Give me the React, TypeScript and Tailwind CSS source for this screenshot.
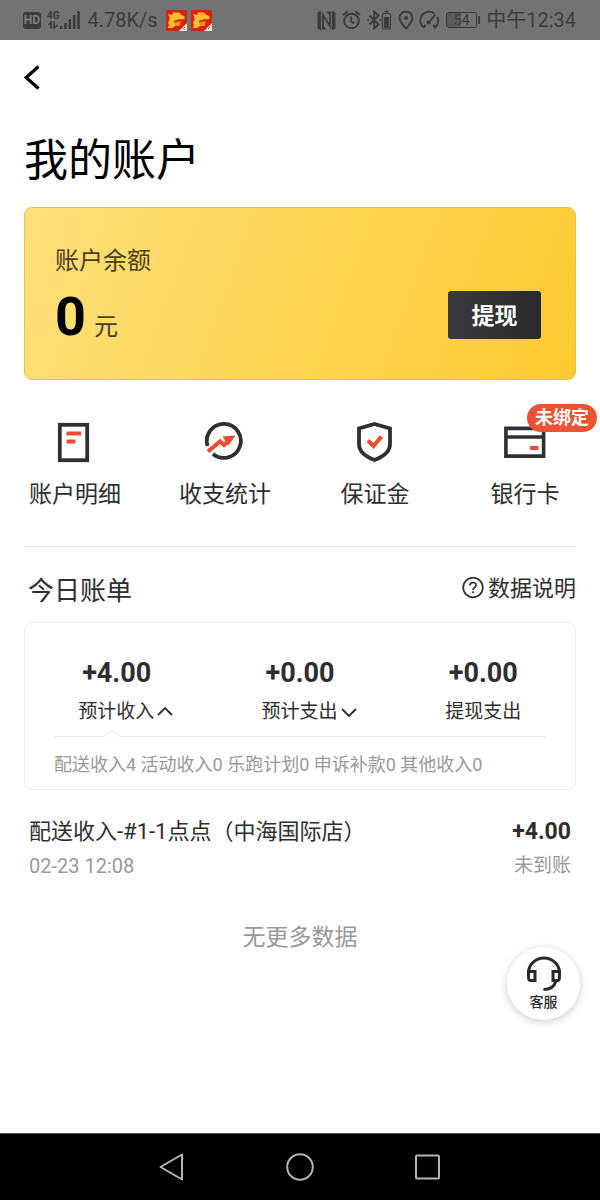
import type { ReactNode } from 'react';

const stats = [
    { amount: '+4.00', label: '预计收入', arrow: 'up' },
    { amount: '+0.00', label: '预计支出', arrow: 'down' },
    { amount: '+0.00', label: '提现支出', arrow: '' },
];

function StatusBar() {
    return (
        <div className="flex h-10 items-center justify-between bg-[#737373] pr-6 pl-[23px] text-xl leading-6 text-[#3c3c3c]">
            <div className="flex items-center">
                <span className="flex h-[17px] w-[18px] items-center justify-center rounded-[3px] bg-[#3c3c3c] text-[12px] leading-4 font-bold text-[#808080]">HD</span>
                <div className="ml-[6px] flex items-end">
                    <div className="flex flex-col items-center">
                        <span className="text-[10px] leading-[10px] font-bold">4G</span>
                        <svg width="10" height="8" viewBox="0 0 10 8" fill="none" stroke="currentColor" strokeWidth="1.6">
                            <path d="M0.5 4L3 1V7.5M6 0.5V7L9.5 4" />
                        </svg>
                    </div>
                    <svg width="20" height="18" viewBox="0 0 20 18" fill="currentColor">
                        <path d="M0 15h2.6v3H0zM4.3 12h2.6v6H4.3zM8.6 8h2.6v10H8.6zM12.9 4h2.6v14h-2.6zM17.2 0h2.6v18h-2.6z" />
                    </svg>
                </div>
                <span className="ml-2">4.78K/s</span>
                <div className="ml-2 flex gap-1">
                    <LionLogo />
                    <LionLogo />
                </div>
            </div>
            <div className="flex items-center">
                {/* NFC */}
                <svg width="19" height="19" viewBox="0 0 19 19">
                    <path d="M2.5 0.5H5L12 12V4L9.5 0.5H16.5Q18.5 0.5 18.5 2.5V16.5Q18.5 18.5 16.5 18.5H14L7 7V15L9.5 18.5H2.5Q0.5 18.5 0.5 16.5V2.5Q0.5 0.5 2.5 0.5Z" fill="#3c3c3c" />
                    <path d="M4.6 1V18M14.4 1V18" stroke="#737373" strokeWidth="1" />
                </svg>
                {/* Alarm */}
                <svg className="ml-[6px]" width="19" height="20" viewBox="0 0 19 20" fill="none" stroke="currentColor" strokeWidth="2">
                    <circle cx="9.5" cy="11" r="7.3" />
                    <path d="M9 6.5V11.5L12.3 13.5M1 5L5.5 1.5M18 5L13.5 1.5" strokeWidth="1.8" />
                </svg>
                {/* Bluetooth with battery */}
                <svg className="ml-[6px]" width="25" height="20" viewBox="0 0 25 20" fill="none" stroke="currentColor" strokeWidth="1.8">
                    <path d="M2.5 5.5L11.5 14.5L7.2 18.5V1.5L11.5 5.5L2.5 14.5" />
                    <path d="M0.5 10H2M12.3 10H13.8" strokeWidth="2" />
                    <path d="M17.5 1.5H21.5" />
                    <rect x="15.5" y="3.5" width="8" height="15.5" rx="1" strokeWidth="1.2" />
                    <path d="M17 7H22V18H17Z" fill="currentColor" stroke="none" />
                </svg>
                {/* Location */}
                <svg className="ml-[6px]" width="16" height="20" viewBox="0 0 16 20" fill="none" stroke="currentColor" strokeWidth="2">
                    <path d="M8 18.5C4.5 14.5 1.5 11.5 1.5 8A6.5 6.5 0 0 1 14.5 8C14.5 11.5 11.5 14.5 8 18.5Z" />
                    <circle cx="8" cy="8" r="2" fill="currentColor" stroke="none" />
                </svg>
                {/* Speed */}
                <svg className="ml-[5px]" width="21" height="20" viewBox="0 0 21 20" fill="none" stroke="currentColor" strokeWidth="2">
                    <path d="M5 17.5A8.6 8.6 0 1 1 15 3.3M18.3 7A8.6 8.6 0 0 1 16 17.5L14.5 14.8M5 17.5L6.5 14.8" />
                    <path d="M16.5 4L10.2 12.2" strokeWidth="1.8" />
                    <circle cx="9.6" cy="12.5" r="2" fill="currentColor" stroke="none" />
                </svg>
                <div className="ml-[6px] flex items-center">
                    <span className="flex h-4 w-[31px] items-center justify-center rounded-[3px] border border-[#3c3c3c] bg-linear-to-r from-[#5a5a5a] from-50% to-transparent to-50% text-[14px]">54</span>
                    <span className="ml-px h-2 w-[2px] bg-[#3c3c3c]"></span>
                </div>
                <span className="ml-[6px]">中午12:34</span>
            </div>
        </div>
    );
}

function LionLogo() {
    return (
        <svg width="21" height="21" viewBox="0 0 21 21">
            <rect width="21" height="21" rx="1.5" fill="#d9230f" />
            <path d="M2 4L6 5L7 2.5H13L15 4.5L18.5 6.5V9L14 9.5L9 10.5L8 12L14.5 11.5L13.5 16H9L6.5 18H2L3 14.5L2 12.5L3.5 10V7Z" fill="#fbc02d" />
            <path d="M8 12L14.5 11.5L13.5 16H9Z" fill="#f58f1e" />
            <path d="M8 11.6L14.5 9.6" stroke="#d9230f" strokeWidth="1.4" />
            <path d="M21 13V21H13Z" fill="#f3e6e2" />
            <path d="M17 19L19 17" stroke="#8d6c66" strokeWidth="1" />
        </svg>
    );
}

function Entry({ label, children }: { label: string; children: ReactNode }) {
    return (
        <a href="#" className="flex flex-col items-center gap-[15px]">
            {children}
            <span className="text-[23px] leading-8">{label}</span>
        </a>
    );
}

function Entries() {
    return (
        <nav className="mt-10 grid grid-cols-4 text-[#2e2e2e]">
            <Entry label="账户明细">
                <svg width="44" height="44" viewBox="0 0 44 44" fill="none">
                    <rect x="6.8" y="4.8" width="27.4" height="35.4" stroke="#2e3033" strokeWidth="3.8" />
                    <path d="M13.5 13.5H28M13.5 21.5H22.5" stroke="#ee4b31" strokeWidth="3.8" />
                </svg>
            </Entry>
            <Entry label="收支统计">
                <svg width="44" height="44" viewBox="0 0 44 44" fill="none">
                    <path d="M4.6 26A17 17 0 1 1 10 34" stroke="#2e3033" strokeWidth="3.8" />
                    <path d="M5 31.5L17 21.5L21 25L27.5 19" stroke="#ee4b31" strokeWidth="4.2" />
                    <path d="M19.5 16.5L32.5 15.5L25.5 25.5Z" fill="#ee4b31" />
                </svg>
            </Entry>
            <Entry label="保证金">
                <svg width="44" height="44" viewBox="0 0 44 44" fill="none">
                    <path d="M21.5 4L37 8.5V24C37 31.5 31 36.5 21.5 40C12 36.5 6 31.5 6 24V8.5Z" stroke="#2e3033" strokeWidth="3.8" />
                    <path d="M15 20.5L20.5 26L28.5 16.5" stroke="#ee4b31" strokeWidth="4.2" />
                </svg>
            </Entry>
            <Entry label="银行卡">
                <div className="relative">
                    <svg width="44" height="44" viewBox="0 0 44 44" fill="none">
                        <path d="M2.9 8.4H40.6V36.1H2.9ZM2.9 17H40.6" stroke="#2e3033" strokeWidth="3.6" />
                        <path d="M27 28H35.5" stroke="#ee4b31" strokeWidth="4" />
                    </svg>
                    <span className="absolute -top-4 left-6 rounded-full bg-[#ed5233] px-2 text-lg leading-7 font-bold whitespace-nowrap text-white">未绑定</span>
                </div>
            </Entry>
        </nav>
    );
}

function Arrow({ dir }: { dir: string }) {
    return (
        <svg width="16" height="12" viewBox="0 0 16 12" fill="none" stroke="currentColor" strokeWidth="1.8">
            <path d={dir === 'up' ? 'M1 9L8 2L15 9' : 'M1 3L8 10L15 3'} />
        </svg>
    );
}

export default function App() {
    return (
        <div className="flex min-h-screen flex-col bg-white font-['Roboto','Noto_Sans_CJK_SC',sans-serif] text-[#2e2e2e]">
            <StatusBar />
            <main className="relative flex-1">
                <header className="px-6">
                    <button type="button" aria-label="返回" className="flex h-[75px] items-center">
                        <svg width="16" height="26" viewBox="0 0 16 26" fill="none" stroke="#000" strokeWidth="3.2">
                            <path d="M14.5 1.5L2.2 12.5L14.5 23.5" />
                        </svg>
                    </button>
                    <h1 className="text-[44px] leading-[92px] text-black">我的账户</h1>
                </header>

                {/* Balance */}
                <section className="mx-6 rounded-lg border border-[#e6c052] bg-linear-110 from-[#fee07a] via-[#fed654] to-[#fdca2f] pt-9 pr-[34px] pb-10 pl-[30px]">
                    <p className="text-2xl leading-[34px] text-[#4a3d1c]">账户余额</p>
                    <div className="mt-[13px] flex items-end justify-between">
                        <p className="flex items-baseline gap-2 leading-8">
                            <span className="text-[54px] font-bold text-black">0</span>
                            <span className="text-2xl leading-6 text-[#4a3d1c]">元</span>
                        </p>
                        <button type="button" className="h-12 w-[93px] rounded-[3px] bg-linear-to-r from-[#3a3a3c] to-[#2a2a2c] pt-1 text-[23px] font-bold text-white">提现</button>
                    </div>
                </section>

                <Entries />

                {/* Today */}
                <section className="mx-6 mt-[35px] border-t border-[#e6e6e6]">
                    <div className="flex items-start justify-between pt-[26px] pb-[13px] pl-1">
                        <h2 className="text-[26px] leading-9">今日账单</h2>
                        <a href="#" className="flex items-center gap-1 text-[22px] leading-8">
                            <svg width="22" height="24" viewBox="0 0 22 24" fill="none" stroke="currentColor" strokeWidth="1.7">
                                <circle cx="11" cy="10.5" r="9.8" />
                                <path d="M8 8.4C8 4.6 14 4.6 14 8.2C14 10.6 11 10.6 11 13" />
                                <path d="M11 14.3V16.2" />
                            </svg>
                            数据说明
                        </a>
                    </div>
                    <div className="rounded-lg border border-[#ececec] pt-[34px] pb-3">
                        <div className="grid grid-cols-3">
                            {stats.map((s) => (
                                <div key={s.label} className="flex flex-col items-center gap-[9px]">
                                    <span className="text-[27px] leading-8 font-bold">{s.amount}</span>
                                    {s.arrow ? (
                                        <button type="button" className="flex items-center gap-[3px] pl-[18px] text-[19px] leading-7">
                                            {s.label}
                                            <Arrow dir={s.arrow} />
                                        </button>
                                    ) : (
                                        <span className="text-[19px] leading-7">{s.label}</span>
                                    )}
                                </div>
                            ))}
                        </div>
                        <div className="mx-[29px] mt-[2px] flex items-end">
                            <span className="h-px w-[50px] bg-[#e8e8e8]"></span>
                            <svg width="16" height="9" viewBox="0 0 16 9" fill="none" stroke="#e4e4e4">
                                <path d="M0 8.5L8 2L16 8.5" />
                            </svg>
                            <span className="h-px flex-1 bg-[#e8e8e8]"></span>
                        </div>
                        <p className="mx-[29px] mt-4 text-lg leading-6 text-[#999]">
                            配送收入4 活动收入0 乐跑计划0 申诉补款0 其他收入0
                        </p>
                    </div>
                </section>

                <section className="mx-[29px] mt-[26px] flex justify-between">
                    <div>
                        <p className="text-[22px] leading-8">配送收入-#1-1点点（中海国际店）</p>
                        <p className="mt-[6px] text-[20px] leading-6 text-[#999]">02-23 12:08</p>
                    </div>
                    <div className="text-right">
                        <p className="text-[23px] leading-8 font-bold">+4.00</p>
                        <p className="mt-[6px] text-[19px] leading-6 text-[#999]">未到账</p>
                    </div>
                </section>

                <p className="mt-11 text-center text-[23px] leading-8 text-[#999]">无更多数据</p>

                <button type="button" className="absolute right-5 bottom-[113px] flex size-[73px] flex-col items-center rounded-full bg-white pt-2 shadow-[0_2px_8px_rgba(0,0,0,0.2)]">
                    <svg width="36" height="37" viewBox="0 0 36 37" fill="none" stroke="#2b2b2b" strokeWidth="3">
                        <path d="M2.5 20V18A15.5 15 0 0 1 33.5 18V20" />
                        <path d="M2.5 16.5H9V25.5H4.5Q2.5 25.5 2.5 22ZM33.5 16.5H27V25.5H31.5Q33.5 25.5 33.5 22Z" />
                        <path d="M30 26Q27.5 34.5 17.5 34.5" />
                    </svg>
                    <span className="text-sm leading-5 font-medium">客服</span>
                </button>
            </main>

            {/* System keys */}
            <footer className="flex h-[67px] items-center justify-center gap-[100px] border-t border-[#555] bg-black text-[#b5b5b5]">
                <button type="button" aria-label="后退">
                    <svg width="28" height="28" viewBox="0 0 28 28" fill="none" stroke="currentColor" strokeWidth="2" strokeLinejoin="round">
                        <path d="M24 1.5V26.5L2.5 14Z" />
                    </svg>
                </button>
                <button type="button" aria-label="主页">
                    <svg width="28" height="28" viewBox="0 0 28 28" fill="none" stroke="currentColor" strokeWidth="2">
                        <circle cx="14" cy="14" r="12.8" />
                    </svg>
                </button>
                <button type="button" aria-label="最近任务">
                    <svg width="28" height="28" viewBox="0 0 28 28" fill="none" stroke="currentColor" strokeWidth="2">
                        <rect x="2" y="2.5" width="23" height="23" rx="1" />
                    </svg>
                </button>
            </footer>
        </div>
    );
}
